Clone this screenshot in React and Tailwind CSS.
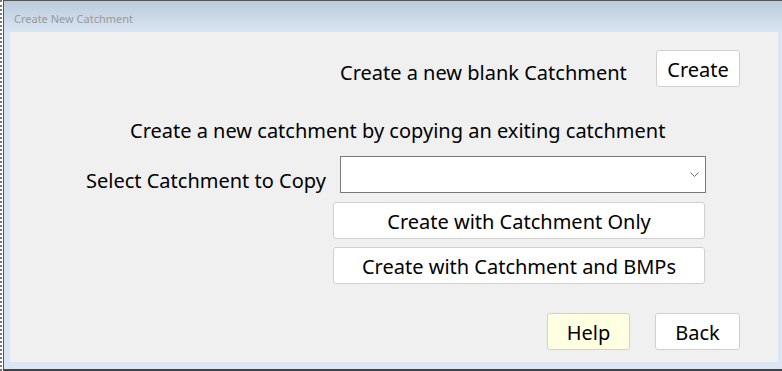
import React from "react";

const font = { fontFamily: '"Noto Sans", "Open Sans", sans-serif' };

function Btn({ children, className = "" }) {
  return (
    <button
      className={`h-[37px] rounded-[3px] border border-[#d0d0d0] text-[20px] text-black leading-none pt-[2px] ${className}`}
    >
      {children}
    </button>
  );
}

export default function App() {
  return (
    <div className="w-[782px] h-[371px] bg-white flex" style={font}>
      <div className="w-[3px] h-full shrink-0 border-l-2 border-dotted border-l-[#777] bg-white" />
      <div className="flex-1 h-full flex flex-col border-l border-l-[#555] border-t border-t-[#555] border-b-2 border-b-[#444] bg-[#dae6f3]">
        <div className="h-[31px] shrink-0 bg-gradient-to-b from-[#bccbdb] to-[#d9e5f2] pt-[12px] pl-[10px] text-[11px] leading-none text-[#9a9a9a]">
          Create New Catchment
        </div>
        <div className="ml-[6px] mr-[4px] h-[330px] bg-[#f0f0f0] flex flex-col">
          <div className="mt-[18px] flex items-center h-[37px]">
            <span className="ml-[330px] pt-[9px] text-[20px] leading-none text-black">Create a new blank Catchment</span>
            <Btn className="ml-auto mr-[38px] w-[84px] bg-white">Create</Btn>
          </div>
          <div className="mt-[25px] h-[36px] flex items-center">
            <span className="ml-[120px] pt-[2px] text-[20px] leading-none text-black">
              Create a new catchment by copying an exiting catchment
            </span>
          </div>
          <div className="mt-[8px] flex items-center h-[37px]">
            <span className="ml-[76px] w-[254px] pt-[12px] text-[20px] leading-none text-black">Select Catchment to Copy</span>
            <div className="w-[366px] h-[37px] bg-white border border-[#7a7a7a] flex items-center justify-end pr-[6px]">
              <svg width="9" height="6" viewBox="0 0 9 6" fill="none">
                <path d="M0.5 0.5 L4.5 4.5 L8.5 0.5" stroke="#707070" strokeWidth="1" />
              </svg>
            </div>
          </div>
          <Btn className="mt-[9px] ml-[323px] w-[372px] bg-white">Create with Catchment Only</Btn>
          <Btn className="mt-[8px] ml-[323px] w-[372px] bg-white">Create with Catchment and BMPs</Btn>
          <div className="mt-[29px] flex items-center">
            <Btn className="ml-[537px] w-[83px] bg-[#ffffe1]">Help</Btn>
            <Btn className="ml-[25px] w-[85px] bg-white">Back</Btn>
          </div>
        </div>
      </div>
    </div>
  );
}
